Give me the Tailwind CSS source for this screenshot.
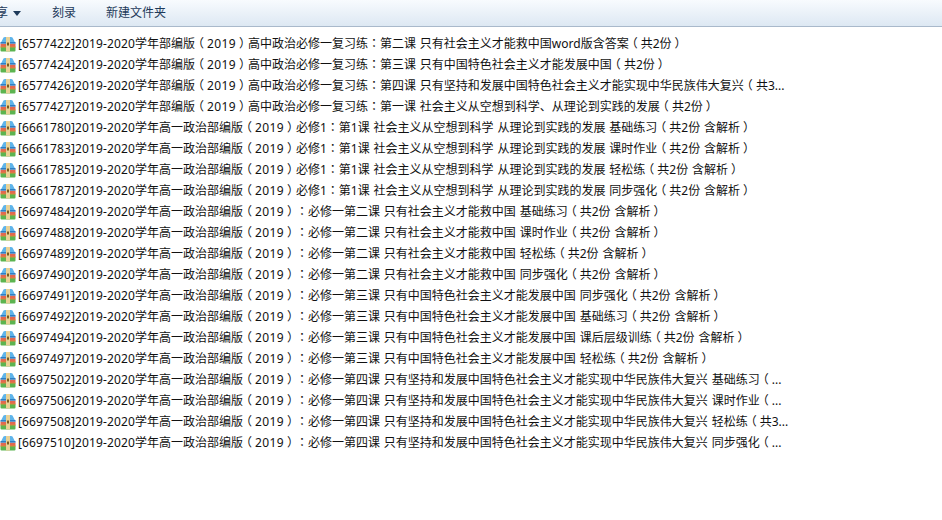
<!DOCTYPE html>
<html><head><meta charset="utf-8"><script src="https://cdn.jsdelivr.net/npm/@tailwindcss/browser@4"></script></head>
<body class="w-[942px] h-[520px] overflow-hidden bg-white font-['Noto_Sans','Noto_Sans_CJK_SC',sans-serif] text-[12px] text-[#111] [text-spacing-trim:space-all]">
<svg class="hidden"><symbol id="r" viewBox="0 0 16 16">
<path d="M.5 11 H15.5 V14.5 Q15.5 15.5 14.5 15.5 H1.5 Q.5 15.5 .5 14.5Z" fill="#5cb450"/><rect x=".5" y="7.5" width="15" height="3.5" fill="#e2684f"/><path d="M.5 7.5 L3.5 1.5 Q4 1 5 1 H11 Q12 1 12.5 1.5 L15.5 7.5Z" fill="#5fb4ea"/><rect x=".5" y="6" width="15" height="1.5" fill="#2f7fc4"/><rect x=".5" y="10.5" width="15" height="1" fill="#d98a3a"/><rect x="6" y="1" width="4" height="14.5" fill="#e9d296"/><rect x="7" y="6.5" width="2" height="3" fill="#7a5a20"/>
</symbol></svg>
<div class="h-[27px] border-b border-[#a9b9cb] bg-gradient-to-b from-[#f8fbfe] to-[#dde8f3] flex items-center text-[#1e3a5a]">
<span class="w-[8px] overflow-hidden flex justify-end">享</span>
<span class="ml-[5px] w-0 h-0 border-x-[4px] border-x-transparent border-t-[5px] border-t-[#1e3a5a]"></span>
<span class="ml-[31px]">刻录</span>
<span class="ml-[30px]">新建文件夹</span>
</div>
<div class="pt-[6px] flex flex-col [word-spacing:0.75px] [&>div]:h-[21px] [&>div]:flex [&>div]:items-center [&>div]:whitespace-pre [&_svg]:ml-0 [&_svg]:mr-[2px] [&_svg]:w-[16px] [&_svg]:h-[16px] [&_svg]:shrink-0 [&_i]:not-italic [&_i]:font-['Noto_Sans_CJK_TC'] [&_b]:font-normal [&_b]:inline-block [&_b]:w-[12px] [&_b]:text-center [&_b]:[font-feature-settings:'halt'] [&_u]:no-underline [&_u]:inline-block [&_u]:w-[12px] [&_u]:text-center [&_u]:[font-feature-settings:'halt'] [&_em]:not-italic [&_em]:tracking-[0.4px]">
<div><svg><use href="#r"/></svg><span><span class="tracking-[0.12px]">[6577422]2019-2020</span>学年部编版<b>（</b><em>2019</em><u>）</u>高中政治必修一复习练<i>：</i>第二课 只有社会主义才能救中国word版含答案<b>（</b>共2份<u>）</u></span></div>
<div><svg><use href="#r"/></svg><span><span class="tracking-[0.12px]">[6577424]2019-2020</span>学年部编版<b>（</b><em>2019</em><u>）</u>高中政治必修一复习练<i>：</i>第三课 只有中国特色社会主义才能发展中国<b>（</b>共2份<u>）</u></span></div>
<div><svg><use href="#r"/></svg><span><span class="tracking-[0.12px]">[6577426]2019-2020</span>学年部编版<b>（</b><em>2019</em><u>）</u>高中政治必修一复习练<i>：</i>第四课 只有坚持和发展中国特色社会主义才能实现中华民族伟大复兴<b>（</b>共3...</span></div>
<div><svg><use href="#r"/></svg><span><span class="tracking-[0.12px]">[6577427]2019-2020</span>学年部编版<b>（</b><em>2019</em><u>）</u>高中政治必修一复习练<i>：</i>第一课 社会主义从空想到科学、从理论到实践的发展<b>（</b>共2份<u>）</u></span></div>
<div><svg><use href="#r"/></svg><span><span class="tracking-[0.12px]">[6661780]2019-2020</span>学年高一政治部编版<b>（</b><em>2019</em><u>）</u>必修1<i>：</i>第1课 社会主义从空想到科学 从理论到实践的发展 基础练习<b>（</b>共2份 含解析<u>）</u></span></div>
<div><svg><use href="#r"/></svg><span><span class="tracking-[0.12px]">[6661783]2019-2020</span>学年高一政治部编版<b>（</b><em>2019</em><u>）</u>必修1<i>：</i>第1课 社会主义从空想到科学 从理论到实践的发展 课时作业<b>（</b>共2份 含解析<u>）</u></span></div>
<div><svg><use href="#r"/></svg><span><span class="tracking-[0.12px]">[6661785]2019-2020</span>学年高一政治部编版<b>（</b><em>2019</em><u>）</u>必修1<i>：</i>第1课 社会主义从空想到科学 从理论到实践的发展 轻松练<b>（</b>共2份 含解析<u>）</u></span></div>
<div><svg><use href="#r"/></svg><span><span class="tracking-[0.12px]">[6661787]2019-2020</span>学年高一政治部编版<b>（</b><em>2019</em><u>）</u>必修1<i>：</i>第1课 社会主义从空想到科学 从理论到实践的发展 同步强化<b>（</b>共2份 含解析<u>）</u></span></div>
<div><svg><use href="#r"/></svg><span><span class="tracking-[0.12px]">[6697484]2019-2020</span>学年高一政治部编版<b>（</b><em>2019</em><u>）</u><i>：</i>必修一第二课 只有社会主义才能救中国 基础练习<b>（</b>共2份 含解析<u>）</u></span></div>
<div><svg><use href="#r"/></svg><span><span class="tracking-[0.12px]">[6697488]2019-2020</span>学年高一政治部编版<b>（</b><em>2019</em><u>）</u><i>：</i>必修一第二课 只有社会主义才能救中国 课时作业<b>（</b>共2份 含解析<u>）</u></span></div>
<div><svg><use href="#r"/></svg><span><span class="tracking-[0.12px]">[6697489]2019-2020</span>学年高一政治部编版<b>（</b><em>2019</em><u>）</u><i>：</i>必修一第二课 只有社会主义才能救中国 轻松练<b>（</b>共2份 含解析<u>）</u></span></div>
<div><svg><use href="#r"/></svg><span><span class="tracking-[0.12px]">[6697490]2019-2020</span>学年高一政治部编版<b>（</b><em>2019</em><u>）</u><i>：</i>必修一第二课 只有社会主义才能救中国 同步强化<b>（</b>共2份 含解析<u>）</u></span></div>
<div><svg><use href="#r"/></svg><span><span class="tracking-[0.12px]">[6697491]2019-2020</span>学年高一政治部编版<b>（</b><em>2019</em><u>）</u><i>：</i>必修一第三课 只有中国特色社会主义才能发展中国 同步强化<b>（</b>共2份 含解析<u>）</u></span></div>
<div><svg><use href="#r"/></svg><span><span class="tracking-[0.12px]">[6697492]2019-2020</span>学年高一政治部编版<b>（</b><em>2019</em><u>）</u><i>：</i>必修一第三课 只有中国特色社会主义才能发展中国 基础练习<b>（</b>共2份 含解析<u>）</u></span></div>
<div><svg><use href="#r"/></svg><span><span class="tracking-[0.12px]">[6697494]2019-2020</span>学年高一政治部编版<b>（</b><em>2019</em><u>）</u><i>：</i>必修一第三课 只有中国特色社会主义才能发展中国 课后层级训练<b>（</b>共2份 含解析<u>）</u></span></div>
<div><svg><use href="#r"/></svg><span><span class="tracking-[0.12px]">[6697497]2019-2020</span>学年高一政治部编版<b>（</b><em>2019</em><u>）</u><i>：</i>必修一第三课 只有中国特色社会主义才能发展中国 轻松练<b>（</b>共2份 含解析<u>）</u></span></div>
<div><svg><use href="#r"/></svg><span><span class="tracking-[0.12px]">[6697502]2019-2020</span>学年高一政治部编版<b>（</b><em>2019</em><u>）</u><i>：</i>必修一第四课 只有坚持和发展中国特色社会主义才能实现中华民族伟大复兴 基础练习<b>（</b>...</span></div>
<div><svg><use href="#r"/></svg><span><span class="tracking-[0.12px]">[6697506]2019-2020</span>学年高一政治部编版<b>（</b><em>2019</em><u>）</u><i>：</i>必修一第四课 只有坚持和发展中国特色社会主义才能实现中华民族伟大复兴 课时作业<b>（</b>...</span></div>
<div><svg><use href="#r"/></svg><span><span class="tracking-[0.12px]">[6697508]2019-2020</span>学年高一政治部编版<b>（</b><em>2019</em><u>）</u><i>：</i>必修一第四课 只有坚持和发展中国特色社会主义才能实现中华民族伟大复兴 轻松练<b>（</b>共3...</span></div>
<div><svg><use href="#r"/></svg><span><span class="tracking-[0.12px]">[6697510]2019-2020</span>学年高一政治部编版<b>（</b><em>2019</em><u>）</u><i>：</i>必修一第四课 只有坚持和发展中国特色社会主义才能实现中华民族伟大复兴 同步强化<b>（</b>...</span></div>
</div>
</body></html>
